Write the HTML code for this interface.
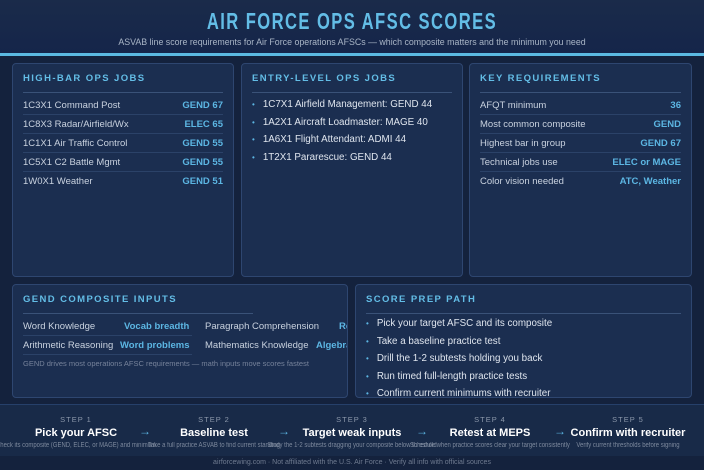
<!DOCTYPE html>
<html><head><style>
*{margin:0;padding:0;box-sizing:border-box}
body{width:704px;height:470px;overflow:hidden;background:#14223d;font-family:"Liberation Sans",sans-serif;color:#c9d2df;position:relative}
.hdr{position:absolute;left:0;top:0;width:704px;height:53px;background:linear-gradient(#1a2b4a,#15254a)}
.title{position:absolute;top:8px;width:100%;text-align:center;font-weight:bold;font-size:23px;letter-spacing:2px;color:#63bde6;transform:scaleX(0.72)}
.sub{position:absolute;top:37px;width:100%;text-align:center;font-size:9.5px;color:#a9b5c6;transform:scaleX(0.93)}
.line{position:absolute;top:53px;left:0;width:704px;height:3px;background:#5bb9e2}
.card{position:absolute;background:#1b2e50;border:1px solid #2e4670;border-radius:4px;padding:0 10px}
.h{font-size:9.5px;font-weight:bold;letter-spacing:1.4px;color:#63bde6;margin-top:9px;padding-bottom:8px;border-bottom:1px solid #3a5278}
.row{display:flex;justify-content:space-between;font-size:9.5px;height:19px;line-height:19px;border-bottom:1px solid #2b4268}
.row:last-child{border-bottom:none}
.row b{color:#5cb6e3}
.li{font-size:9.8px;color:#dfe5ee;height:17.5px;line-height:17.5px}
.li:before{content:"•";color:#5cb6e3;font-size:8px;margin-right:8px}
.steps{position:absolute;top:404px;left:0;width:704px;height:52px;background:#182a48;border-top:1px solid #26406a}
.st{position:absolute;top:0;width:140px;text-align:center}
.st .n{font-size:7.5px;letter-spacing:1px;color:#8b97aa;margin-top:10px}
.st .t{font-size:11px;font-weight:bold;color:#fff;margin-top:3px}
.st .d{font-size:7px;color:#7d899d;margin-top:3px;white-space:nowrap;margin-left:-100px;margin-right:-100px}
.ar{position:absolute;top:19px;color:#5cb6e3;font-size:12px}
.foot{position:absolute;top:459px;width:100%;text-align:center;font-size:7px;color:#6f7b90}
.a{position:absolute;font-size:9.5px;white-space:nowrap}
.a b{color:#5cb6e3}
</style></head><body>
<div class="hdr"><div class="title">AIR FORCE OPS AFSC SCORES</div><div class="sub">ASVAB line score requirements for Air Force operations AFSCs — which composite matters and the minimum you need</div></div>
<div class="line"></div>

<div class="card" style="left:12px;top:63px;width:222px;height:214px">
<div class="h">HIGH-BAR OPS JOBS</div>
<div class="row" style="margin-top:3px"><span>1C3X1 Command Post</span><b>GEND 67</b></div>
<div class="row"><span>1C8X3 Radar/Airfield/Wx</span><b>ELEC 65</b></div>
<div class="row"><span>1C1X1 Air Traffic Control</span><b>GEND 55</b></div>
<div class="row"><span>1C5X1 C2 Battle Mgmt</span><b>GEND 55</b></div>
<div class="row"><span>1W0X1 Weather</span><b>GEND 51</b></div>
</div>

<div class="card" style="left:241px;top:63px;width:222px;height:214px">
<div class="h">ENTRY-LEVEL OPS JOBS</div>
<div style="margin-top:3px">
<div class="li">1C7X1 Airfield Management: GEND 44</div>
<div class="li">1A2X1 Aircraft Loadmaster: MAGE 40</div>
<div class="li">1A6X1 Flight Attendant: ADMI 44</div>
<div class="li">1T2X1 Pararescue: GEND 44</div>
</div></div>

<div class="card" style="left:469px;top:63px;width:223px;height:214px">
<div class="h">KEY REQUIREMENTS</div>
<div class="row" style="margin-top:3px"><span>AFQT minimum</span><b>36</b></div>
<div class="row"><span>Most common composite</span><b>GEND</b></div>
<div class="row"><span>Highest bar in group</span><b>GEND 67</b></div>
<div class="row"><span>Technical jobs use</span><b>ELEC or MAGE</b></div>
<div class="row"><span>Color vision needed</span><b>ATC, Weather</b></div>
</div>

<div class="card" style="left:12px;top:284px;width:336px;height:114px;overflow:hidden">
<div class="h" style="width:230px">GEND COMPOSITE INPUTS</div>
<div style="position:relative;height:40px;margin-top:3px">
<div style="position:absolute;left:0;top:0;width:169px;height:19px;border-bottom:1px solid #2b4268"></div>
<div style="position:absolute;left:0;top:19px;width:169px;height:19px;border-bottom:1px solid #2b4268"></div>
<div class="a" style="left:0;top:4px">Word Knowledge</div>
<div class="a" style="left:101px;top:4px"><b>Vocab breadth</b></div>
<div class="a" style="left:182px;top:4px">Paragraph Comprehension</div>
<div class="a" style="left:316px;top:4px"><b>Reading</b></div>
<div class="a" style="left:0;top:23px">Arithmetic Reasoning</div>
<div class="a" style="left:97px;top:23px"><b>Word problems</b></div>
<div class="a" style="left:182px;top:23px">Mathematics Knowledge</div>
<div class="a" style="left:293px;top:23px"><b>Algebra</b></div>
</div>
<div style="font-size:7.5px;color:#76829a;margin-top:2px">GEND drives most operations AFSC requirements — math inputs move scores fastest</div>
</div>

<div class="card" style="left:355px;top:284px;width:337px;height:114px;overflow:hidden">
<div class="h">SCORE PREP PATH</div>
<div style="margin-top:1px">
<div class="li">Pick your target AFSC and its composite</div>
<div class="li">Take a baseline practice test</div>
<div class="li">Drill the 1-2 subtests holding you back</div>
<div class="li">Run timed full-length practice tests</div>
<div class="li">Confirm current minimums with recruiter</div>
</div></div>

<div class="steps">
<div class="st" style="left:6px"><div class="n">STEP 1</div><div class="t">Pick your AFSC</div><div class="d" style="transform:scaleX(0.85)">Check its composite (GEND, ELEC, or MAGE) and minimum</div></div>
<div class="ar" style="left:139px">→</div>
<div class="st" style="left:144px"><div class="n">STEP 2</div><div class="t">Baseline test</div><div class="d" style="transform:scaleX(0.85)">Take a full practice ASVAB to find current standing</div></div>
<div class="ar" style="left:278px">→</div>
<div class="st" style="left:282px"><div class="n">STEP 3</div><div class="t">Target weak inputs</div><div class="d" style="transform:scaleX(0.85)">Study the 1-2 subtests dragging your composite below threshold</div></div>
<div class="ar" style="left:416px">→</div>
<div class="st" style="left:420px"><div class="n">STEP 4</div><div class="t">Retest at MEPS</div><div class="d" style="transform:scaleX(0.85)">Schedule when practice scores clear your target consistently</div></div>
<div class="ar" style="left:554px">→</div>
<div class="st" style="left:558px"><div class="n">STEP 5</div><div class="t">Confirm with recruiter</div><div class="d" style="transform:scaleX(0.85)">Verify current thresholds before signing</div></div>
</div>
<div class="foot">airforcewing.com · Not affiliated with the U.S. Air Force · Verify all info with official sources</div>
</body></html>
